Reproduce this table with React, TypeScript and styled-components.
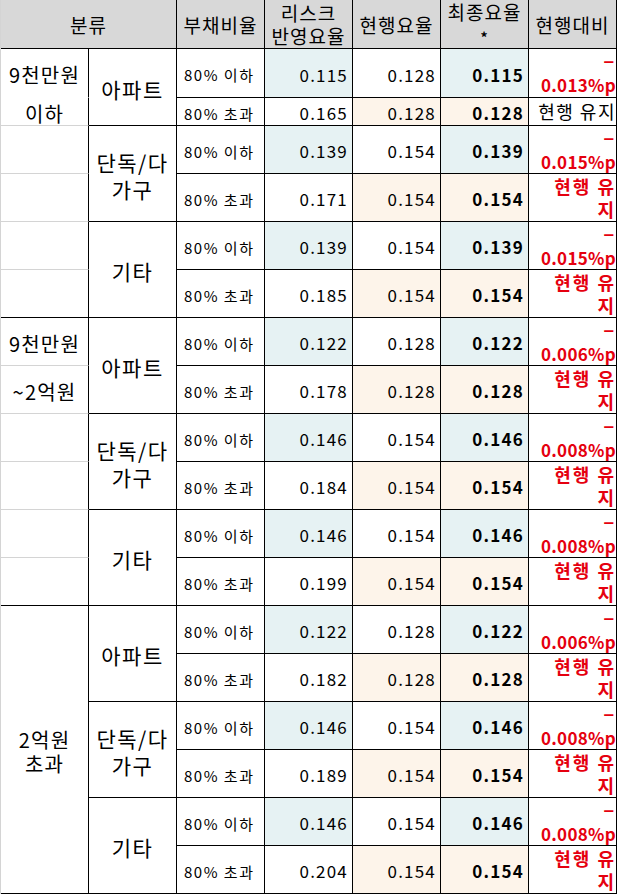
import React from 'react';
import styled, { createGlobalStyle } from 'styled-components';

type Edge = 'none' | 'gray' | 'black';

interface RateRow {
  ratio: string;
  risk: string;
  current: string;
  final: string;
  diff: string | null; // null means 현행 유지
}

interface TypeBlock {
  name: string[];
  rows: [RateRow, RateRow];
}

interface PriceGroup {
  labels: string[] | null; // one label per row, or null when merged
  merged?: string[];
  types: TypeBlock[];
}

const BLUE = '#e6f2f3';
const PEACH = '#fdf4ea';
const GRID_GRAY = '#d4d4d4';
const RED = '#e5000f';

const GlobalStyle = createGlobalStyle`
  html, body {
    margin: 0;
    padding: 0;
    background: #ffffff;
  }
  body {
    font-family: 'Noto Sans CJK KR', 'Noto Sans', sans-serif;
    color: #000;
  }
`;

const Sheet = styled.div`
  display: grid;
  grid-template-columns: repeat(7, 88px);
  grid-template-rows: 49px 49px 28px repeat(16, 48px);
  width: 617px;
  box-sizing: border-box;
  border-left: 1px solid ${GRID_GRAY};
`;

interface PlaceProps {
  $row: number;
  $col: number;
  $rowSpan?: number;
  $colSpan?: number;
}

const Cell = styled.div<PlaceProps>`
  grid-row: ${(p) => p.$row} / span ${(p) => p.$rowSpan ?? 1};
  grid-column: ${(p) => p.$col} / span ${(p) => p.$colSpan ?? 1};
  box-sizing: border-box;
  display: flex;
  align-items: center;
  overflow: hidden;
  border-right: 1px solid #000;
  border-bottom: 1px solid #000;
  white-space: nowrap;
`;

const HeadCell = styled(Cell)`
  justify-content: center;
  text-align: center;
  background: #d8d8d8;
  font-size: 19px;
  line-height: 23px;
  letter-spacing: 1px;
`;

const Star = styled.span`
  font-size: 14px;
  font-weight: 700;
`;

const GroupCell = styled(Cell)<{ $edge: Edge }>`
  justify-content: center;
  text-align: center;
  font-size: 20px;
  line-height: 24px;
  letter-spacing: 1.2px;
  padding-top: 4px;
  border-bottom: 1px solid
    ${(p) => (p.$edge === 'black' ? '#000' : p.$edge === 'gray' ? GRID_GRAY : '#fff')};
`;

const TypeCell = styled(Cell)`
  justify-content: center;
  text-align: center;
  font-size: 21px;
  line-height: 27px;
  letter-spacing: 1.5px;
  padding-top: 4px;
`;

const RatioCell = styled(Cell)`
  padding: 3px 0 0 7px;
  font-size: 15px;
  letter-spacing: 1.5px;
`;

const NumCell = styled(Cell)<{ $bg?: string; $bold?: boolean }>`
  justify-content: flex-end;
  padding: 2px 4px 0 0;
  background: ${(p) => p.$bg ?? '#fff'};
  font-size: 17px;
  letter-spacing: 1.2px;
  font-weight: ${(p) => (p.$bold ? 700 : 400)};
`;

const DiffCell = styled(Cell)<{ $tone: 'red' | 'black' }>`
  justify-content: flex-end;
  text-align: right;
  padding: 0;
  color: ${(p) => (p.$tone === 'red' ? RED : '#000')};
  font-weight: ${(p) => (p.$tone === 'red' ? 700 : 400)};
  font-size: 18px;
  letter-spacing: ${(p) => (p.$tone === 'red' ? '2px' : '1.5px')};
  line-height: 23px;
`;

const DiffNum = styled.span`
  font-size: 17px;
  letter-spacing: 0.3px;
`;

const r = (ratio: string, risk: string, current: string, final: string, diff: string | null): RateRow => ({
  ratio,
  risk,
  current,
  final,
  diff,
});

const groups: PriceGroup[] = [
  {
    labels: ['9천만원', '이하', '', '', '', ''],
    types: [
      { name: ['아파트'], rows: [r('80% 이하', '0.115', '0.128', '0.115', '0.013%p'), r('80% 초과', '0.165', '0.128', '0.128', null)] },
      { name: ['단독/다', '가구'], rows: [r('80% 이하', '0.139', '0.154', '0.139', '0.015%p'), r('80% 초과', '0.171', '0.154', '0.154', null)] },
      { name: ['기타'], rows: [r('80% 이하', '0.139', '0.154', '0.139', '0.015%p'), r('80% 초과', '0.185', '0.154', '0.154', null)] },
    ],
  },
  {
    labels: ['9천만원', '~2억원', '', '', '', ''],
    types: [
      { name: ['아파트'], rows: [r('80% 이하', '0.122', '0.128', '0.122', '0.006%p'), r('80% 초과', '0.178', '0.128', '0.128', null)] },
      { name: ['단독/다', '가구'], rows: [r('80% 이하', '0.146', '0.154', '0.146', '0.008%p'), r('80% 초과', '0.184', '0.154', '0.154', null)] },
      { name: ['기타'], rows: [r('80% 이하', '0.146', '0.154', '0.146', '0.008%p'), r('80% 초과', '0.199', '0.154', '0.154', null)] },
    ],
  },
  {
    labels: null,
    merged: ['2억원', '초과'],
    types: [
      { name: ['아파트'], rows: [r('80% 이하', '0.122', '0.128', '0.122', '0.006%p'), r('80% 초과', '0.182', '0.128', '0.128', null)] },
      { name: ['단독/다', '가구'], rows: [r('80% 이하', '0.146', '0.154', '0.146', '0.008%p'), r('80% 초과', '0.189', '0.154', '0.154', null)] },
      { name: ['기타'], rows: [r('80% 이하', '0.146', '0.154', '0.146', '0.008%p'), r('80% 초과', '0.204', '0.154', '0.154', null)] },
    ],
  },
];

const Lines = ({ lines }: { lines: string[] }) => (
  <div>
    {lines.map((l, i) => (
      <React.Fragment key={i}>
        {i > 0 && <br />}
        {l}
      </React.Fragment>
    ))}
  </div>
);

const App = () => {
  const cells: React.ReactNode[] = [];
  let row = 2;
  // the very first "현행 유지" fits on one line in black
  let firstKeep = true;

  groups.forEach((g, gi) => {
    const start = row;
    if (g.merged) {
      cells.push(
        <GroupCell key={`g${gi}`} $row={start} $col={1} $rowSpan={6} $edge="black">
          <Lines lines={g.merged} />
        </GroupCell>
      );
    }
    g.types.forEach((t, ti) => {
      t.rows.forEach((rr, ri) => {
        const idx = ti * 2 + ri;
        if (g.labels) {
          const edge: Edge = idx === 5 ? 'black' : gi === 0 && idx === 0 ? 'none' : 'gray';
          cells.push(
            <GroupCell key={`l${row}`} $row={row} $col={1} $edge={edge}>
              {g.labels[idx]}
            </GroupCell>
          );
        }
        if (ri === 0) {
          cells.push(
            <TypeCell key={`t${row}`} $row={row} $col={2} $rowSpan={2}>
              <Lines lines={t.name} />
            </TypeCell>
          );
        }
        const low = ri === 0;
        cells.push(
          <RatioCell key={`r${row}`} $row={row} $col={3}>
            {rr.ratio}
          </RatioCell>,
          <NumCell key={`a${row}`} $row={row} $col={4} $bg={low ? BLUE : undefined}>
            {rr.risk}
          </NumCell>,
          <NumCell key={`b${row}`} $row={row} $col={5} $bg={low ? undefined : PEACH}>
            {rr.current}
          </NumCell>,
          <NumCell key={`c${row}`} $row={row} $col={6} $bg={low ? BLUE : PEACH} $bold>
            {rr.final}
          </NumCell>
        );
        if (rr.diff) {
          cells.push(
            <DiffCell key={`d${row}`} $row={row} $col={7} $tone="red">
              <div>
                −<br />
                <DiffNum>{rr.diff}</DiffNum>
              </div>
            </DiffCell>
          );
        } else if (firstKeep) {
          firstKeep = false;
          cells.push(
            <DiffCell key={`d${row}`} $row={row} $col={7} $tone="black">
              현행 유지
            </DiffCell>
          );
        } else {
          cells.push(
            <DiffCell key={`d${row}`} $row={row} $col={7} $tone="red">
              <Lines lines={['현행 유', '지']} />
            </DiffCell>
          );
        }
        row += 1;
      });
    });
  });

  return (
    <>
      <GlobalStyle />
      <Sheet>
        <HeadCell $row={1} $col={1} $colSpan={2}>분류</HeadCell>
        <HeadCell $row={1} $col={3}>부채비율</HeadCell>
        <HeadCell $row={1} $col={4}>
          <Lines lines={['리스크', '반영요율']} />
        </HeadCell>
        <HeadCell $row={1} $col={5}>현행요율</HeadCell>
        <HeadCell $row={1} $col={6}>
          <div>
            최종요율
            <br />
            <Star>*</Star>
          </div>
        </HeadCell>
        <HeadCell $row={1} $col={7}>현행대비</HeadCell>
        {cells}
      </Sheet>
    </>
  );
};

export default App;
